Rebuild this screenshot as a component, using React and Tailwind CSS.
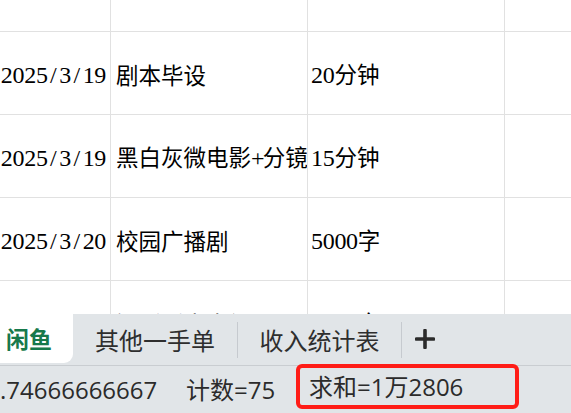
import React from 'react'

const rows = [
  { date: '2025/3/9', title: '同人小说', amount: '1万字' },
  { date: '2025/3/19', title: '剧本毕设', amount: '20分钟' },
  { date: '2025/3/19', title: '黑白灰微电影+分镜', amount: '15分钟' },
  { date: '2025/3/20', title: '校园广播剧', amount: '5000字' },
  { date: '2025/3/21', title: '短剧剧本大纲', amount: '3000字' },
]

// SimSun-like cell text: half-width latin, full-width CJK
function CellText({ text }) {
  return Array.from(text).map((ch, i) =>
    ch.charCodeAt(0) < 128 ? (
      <span key={i} className="inline-block w-[11.7px] text-center font-['Liberation_Serif',serif] text-[24px]">
        {ch}
      </span>
    ) : (
      <span key={i} className="font-['Noto_Sans_CJK_SC',sans-serif] text-[22.5px]">
        {ch}
      </span>
    )
  )
}

function PlusIcon() {
  return (
    <svg width="20" height="20" viewBox="0 0 20 20" className="text-[#2b2b2b]">
      <path d="M10 1.5v17M1.5 10h17" stroke="currentColor" strokeWidth="3.6" strokeLinecap="round" fill="none" />
    </svg>
  )
}

export default function App() {
  return (
    <div className="w-[571px] h-[413px] overflow-hidden bg-white flex flex-col font-['Open_Sans','Noto_Sans_CJK_SC',sans-serif]">
      {/* Sheet grid */}
      <div className="h-[314px] shrink-0 overflow-hidden">
        <div className="mt-[-51px]">
          {rows.map((row, idx) => {
            const pad = idx === 0 ? 'pb-[6px]' : 'pt-[4px]'
            return (
              <div key={idx} className="flex h-[83px] border-b border-[#e1e1e1] text-black">
                <div className={`w-[111px] shrink-0 border-r border-[#e1e1e1] flex items-center justify-end pr-[4px] whitespace-nowrap overflow-hidden ${pad}`}>
                  <span><CellText text={row.date} /></span>
                </div>
                <div className={`w-[197px] shrink-0 border-r border-[#e1e1e1] flex items-center pl-[5px] whitespace-nowrap overflow-hidden ${pad}`}>
                  <span><CellText text={row.title} /></span>
                </div>
                <div className={`w-[197px] shrink-0 border-r border-[#e1e1e1] flex items-center pl-[3px] whitespace-nowrap overflow-hidden ${pad}`}>
                  <span><CellText text={row.amount} /></span>
                </div>
                <div className="flex-1" />
              </div>
            )
          })}
        </div>
      </div>

      {/* Sheet tabs */}
      <div className="h-[52px] shrink-0 bg-[#e1e5e8] flex items-start border-b border-[#c9cdd1] text-[#2e2e2e] whitespace-nowrap">
        <div className="w-[73px] h-[49px] bg-white rounded-br-[9px] flex items-center pl-[6px] text-[23px] font-bold text-[#17794b] font-['Noto_Sans_CJK_SC',sans-serif]">
          闲鱼
        </div>
        <div className="w-[164px] h-full flex items-center justify-center text-[24px] font-['Noto_Sans_CJK_SC',sans-serif]">
          其他一手单
        </div>
        <div className="w-px h-[36px] mt-[8px] bg-[#c6cacf]" />
        <div className="w-[163px] h-full flex items-center justify-center text-[24px] font-['Noto_Sans_CJK_SC',sans-serif]">
          收入统计表
        </div>
        <div className="w-px h-[36px] mt-[8px] bg-[#c6cacf]" />
        <div className="h-full flex items-center pl-[13px] pb-[1px]">
          <PlusIcon />
        </div>
      </div>

      {/* Status bar */}
      <div className="flex-1 bg-[#e1e5e8] flex items-start text-[24px] text-[#2b2b2b] whitespace-nowrap">
        <span className="h-full flex items-center w-[157px] shrink-0">.74666666667</span>
        <span className="h-full flex items-center ml-[29px] w-[93px] shrink-0">计数=75</span>
        <div className="mt-[-2px] ml-[17px] h-[45px] w-[223px] shrink-0 border-[4px] border-[#ff1c17] rounded-[6px] flex items-center pl-[9px] pt-[1px]">
          求和=1万2806
        </div>
      </div>
    </div>
  )
}
